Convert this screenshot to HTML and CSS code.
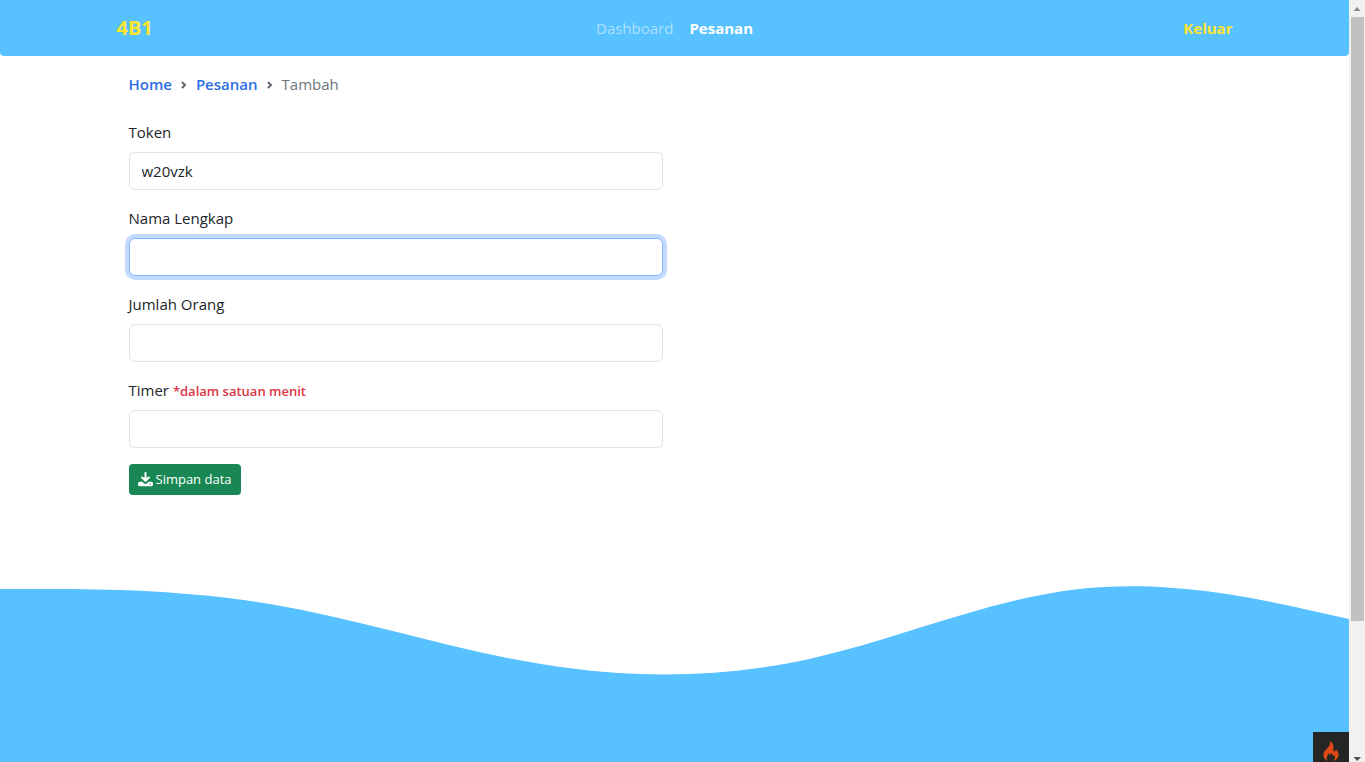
FILE: index.html
```html
<!DOCTYPE html>
<html lang="id">
<head>
<meta charset="utf-8">
<meta name="viewport" content="width=device-width, initial-scale=1">
<title>Tambah Pesanan</title>
<link rel="stylesheet" href="styles.css">
</head>
<body>
<div class="page">
  <nav class="navbar">
    <div class="container navbar-inner">
      <a class="brand" href="#">4B1</a>
      <div class="nav-links">
        <a class="nav-link" href="#">Dashboard</a>
        <a class="nav-link active" href="#">Pesanan</a>
      </div>
      <a class="logout" href="#">Keluar</a>
    </div>
  </nav>
  <main class="container">
    <div class="content">
      <ol class="breadcrumb">
        <li><a href="#">Home</a></li>
        <li><svg class="chevron" viewBox="0 0 8 9"><path d="M2 2l3 3-3 3"/></svg><a href="#">Pesanan</a></li>
        <li class="current"><svg class="chevron" viewBox="0 0 8 9"><path d="M2 2l3 3-3 3"/></svg>Tambah</li>
      </ol>
      <form class="form">
        <div class="field">
          <label for="token">Token</label>
          <input class="control" id="token" type="text" value="w20vzk">
        </div>
        <div class="field">
          <label for="nama">Nama Lengkap</label>
          <input class="control focused" id="nama" type="text">
        </div>
        <div class="field">
          <label for="jumlah">Jumlah Orang</label>
          <input class="control" id="jumlah" type="text">
        </div>
        <div class="field">
          <label for="timer">Timer <small>*dalam satuan menit</small></label>
          <input class="control" id="timer" type="text">
        </div>
        <button class="save" type="button"><svg viewBox="0 0 15 15" fill="currentColor"><path d="M6.500 1c0-.6.400-1 1-1s1 .4 1 1v4.800l2.100-1.100c.9-.5 1.900.5 1.200 1.300L8.300 9.600c-.5.500-1.100.5-1.600 0L3.200 6c-.7-.8.300-1.800 1.200-1.300l2.100 1.100z"/><path fill-rule="evenodd" d="M1.800 9.800h2.600l1.500 1.500c.9.900 2.300.9 3.200 0l1.500-1.500h2.600c1 0 1.800.8 1.800 1.800v.8c0 1-.8 1.800-1.800 1.800H1.800c-1 0-1.800-.8-1.800-1.800v-.8c0-1 .8-1.800 1.800-1.800zM12.400 11.400a.7.700 0 1 0 0 1.400.7.700 0 0 0 0-1.400z"/></svg>Simpan data</button>
      </form>
    </div>
  </main>
  <svg class="wave" viewBox="0 0 1440 320" aria-hidden="true"><path fill="#58c1ff" d="M0,96L48,96C96,96,192,96,288,112C384,128,480,160,576,176C672,192,768,192,864,170.700C960,149.300,1056,106.700,1152,96C1248,85.300,1344,106.700,1392,117.300L1440,128L1440,320L0,320Z"/></svg>
  <button class="debug" type="button" aria-label="Debug toolbar"><svg viewBox="0 0 16 20"><path fill="#dd4814" d="M6.500 0C7.700 2.600 6.700 4.500 4.500 6.900 2.200 9.300.4 11 .4 14c0 2.900 1.800 5.100 4.800 6-1.700-1.500-2-3.500-.9-5 .8-1.200 1-1.800.8-2.900 1 .4 1.500 1.300 1.300 2.500.9-.6 1.200-1.700.9-2.900 1.300.8 2.400 1.800 2.900 3.300.8-.3 1-.8 1-1.500 1.500 2.300 1 4.800-1.400 6.500 3.400-.7 5.800-3 5.800-6.200 0-2.300-1.200-4-3-5.800.3 1.200.1 2-.5 2.400-.9.500-1.700-.2-1.700-1.300C10.500 5.700 11.200 2.300 6.500 0z"/></svg></button>
</div>
<div class="scrollbar" aria-hidden="true">
  <svg viewBox="0 0 16 17"><path fill="#8a8a8a" d="M4.500 11L8 7l3.500 4z"/></svg>
  <div class="track"><div class="thumb"></div></div>
  <svg viewBox="0 0 16 17"><path fill="#505050" d="M4.500 12h7.500l-3.700 4z"/></svg>
</div>
</body>
</html>
```
FILE: styles.css
```css
* { box-sizing: border-box; }

body {
  margin: 0;
  height: 100vh;
  overflow: hidden;
  display: grid;
  grid-template-columns: 1fr 16px;
  background: #fff;
  color: #212529;
  font-family: "Open Sans", "Noto Sans", sans-serif;
  font-size: 15px;
  line-height: 24px;
}

a { text-decoration: none; }

.page {
  position: relative;
  height: 100vh;
  overflow: hidden;
}

.container {
  width: 100%;
  max-width: 1140px;
  margin: 0 auto;
  padding: 0 12px;
}

.navbar {
  background: #58c1ff;
  border-radius: 0 0 4px 4px;
  padding: 8px 0;
}

.navbar-inner {
  display: grid;
  grid-template-columns: 1fr auto 1fr;
  align-items: center;
  height: 40px;
}

.brand {
  color: #ffe62e;
  font-size: 20px;
  font-weight: 700;
}

.nav-links { display: flex; gap: 16px; }

.nav-link { color: rgba(255, 255, 255, .5); }

.nav-link.active { color: #fff; font-weight: 700; }

.logout {
  justify-self: end;
  color: #ffe62e;
  font-weight: 700;
}

.content { padding: 16px 12px 4px; }

.breadcrumb {
  display: flex;
  gap: 8px;
  list-style: none;
  margin: 0 0 24px;
  padding: 0;
}

.breadcrumb li { display: flex; align-items: center; gap: 8px; }

.breadcrumb a { color: #2b6de8; font-weight: 600; }

.breadcrumb .current { color: #6c757d; }

.chevron {
  width: 8px;
  height: 9px;
  fill: none;
  stroke: #5f666d;
  stroke-width: 2;
}

.form { width: 50%; padding-right: 12px; }

.field { margin-bottom: 16px; }

.field label { display: block; margin-bottom: 8px; }

.field small {
  color: #dc3545;
  font-size: 13px;
  font-weight: 600;
  line-height: 16px;
}

.control {
  display: block;
  width: 100%;
  height: 38px;
  padding: 6px 12px;
  border: 1px solid #dee2e6;
  border-radius: 6px;
  background: #fff;
  color: #212529;
  font: inherit;
  outline: 0;
}

.control.focused,
.control:focus {
  border-color: #86b7fe;
  box-shadow: 0 0 0 4px #c2dbfe;
}

.save {
  display: flex;
  align-items: center;
  gap: 3px;
  padding: 5px 9px;
  border: 0;
  border-radius: 4px;
  background: #198754;
  color: #fff;
  font: inherit;
  font-size: 13px;
  line-height: 21px;
}

.save svg { width: 15px; height: 15px; }

.wave { display: block; width: 100%; }

.debug {
  position: absolute;
  right: 0;
  bottom: 0;
  width: 36px;
  height: 30px;
  padding: 8px 10px 0;
  border: 0;
  background: #252525;
}

.debug svg { display: block; width: 16px; height: 22px; }

.scrollbar {
  display: flex;
  flex-direction: column;
  height: 100vh;
  background: #f1f1f1;
}

.scrollbar svg { display: block; height: 17px; }

.track { flex: 1; padding: 0 1px 0 2px; }

.thumb { height: 83%; background: #c1c1c1; }
```
